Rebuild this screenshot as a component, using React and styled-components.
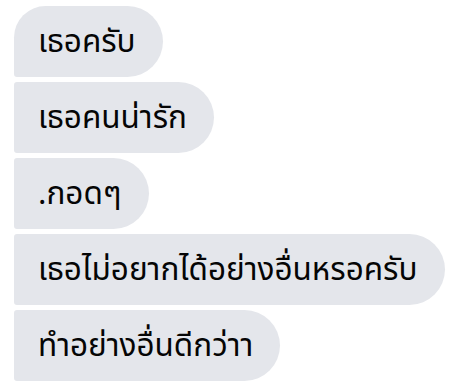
import React from "react";
import styled, { createGlobalStyle } from "styled-components";

const messages = [
    "เธอครับ",
    "เธอคนน่ารัก",
    ".กอดๆ",
    "เธอไม่อยากได้อย่างอื่นหรอครับ",
    "ทำอย่างอื่นดีกว่าา",
];

const App = () => {
    return (
        <>
            <GlobalStyle />
            <Thread>
                {messages.map((m, index) => (
                    <Bubble key={index} first={index === 0}>
                        {m}
                    </Bubble>
                ))}
            </Thread>
        </>
    );
};

export default App;

const GlobalStyle = createGlobalStyle`
    body {
        margin: 0;
        background: #ffffff;
        font-family: "Noto Sans", "Noto Sans Thai", sans-serif;
    }
`;

const Thread = styled.div`
    width: 474px;
    height: 388px;
    padding: 6px 14px 0;
    box-sizing: border-box;
    display: flex;
    flex-direction: column;
    align-items: flex-start;
    gap: 5px;
`;

const Bubble = styled.div`
    height: 71px;
    display: flex;
    align-items: center;
    padding: 0 27px 0 24px;
    box-sizing: border-box;
    background-color: #e4e6eb;
    color: #050505;
    font-size: 31.5px;
    white-space: nowrap;
    border-radius: ${(props) => (props.first ? "32px" : "3px")} 36px 36px 3px;
`;
